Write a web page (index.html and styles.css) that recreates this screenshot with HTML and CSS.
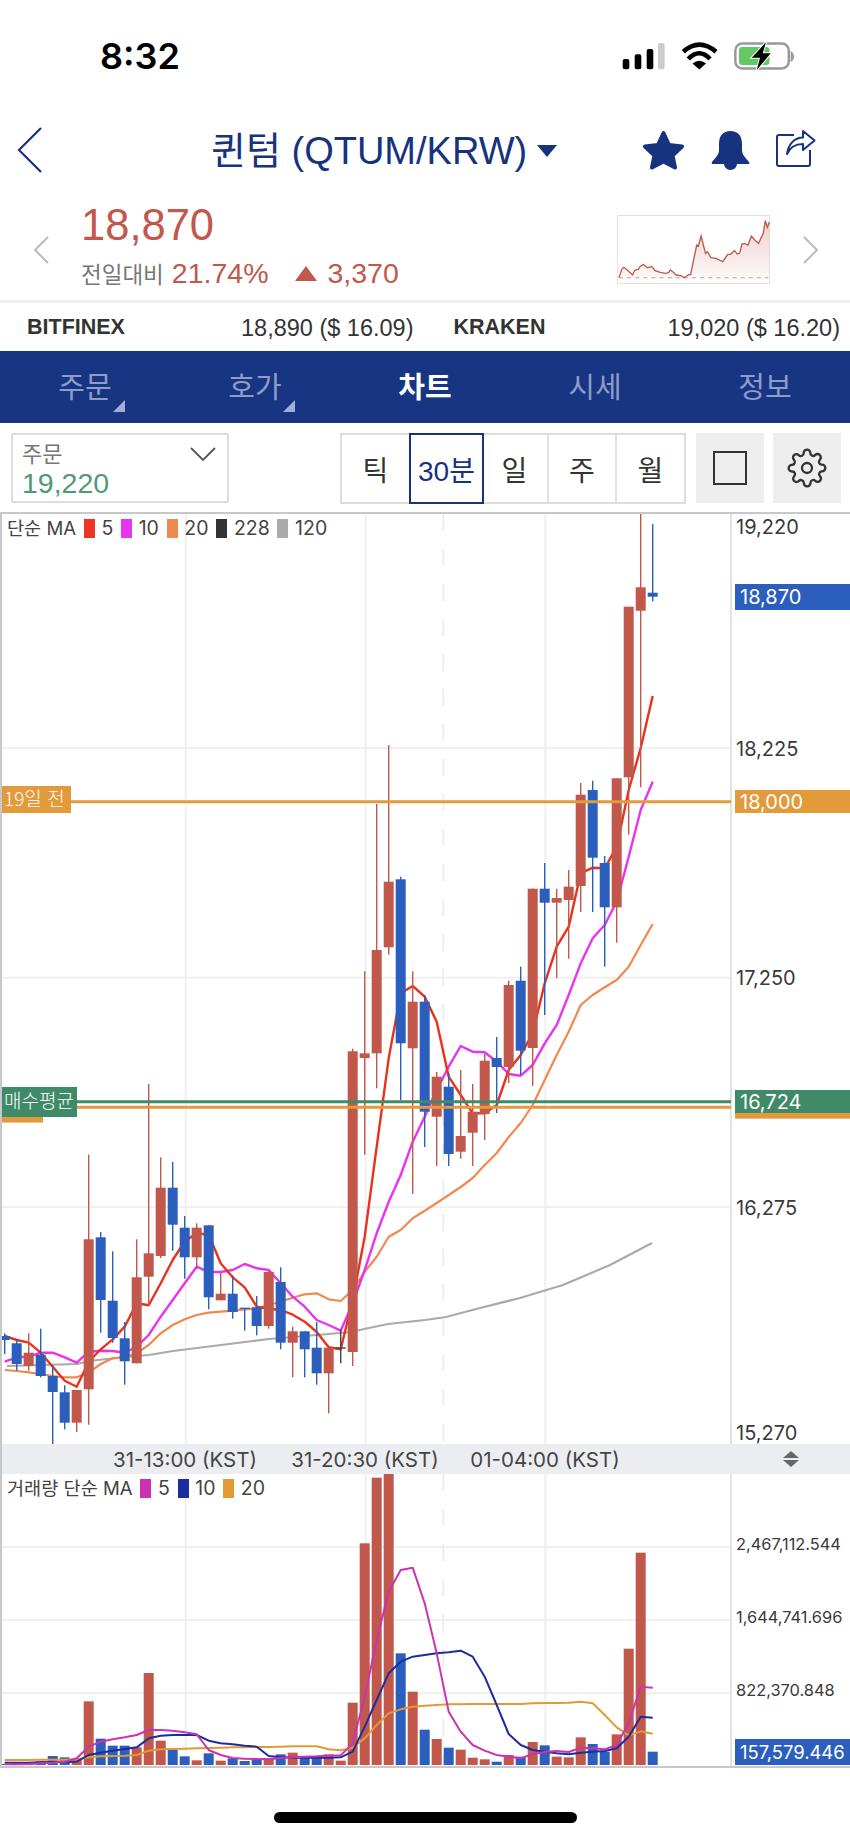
FILE: index.html

```html
<!DOCTYPE html>
<html lang="ko">
<head>
  <meta charset="UTF-8">
  <title>퀸텀 차트</title>
  <link rel="stylesheet" href="styles.css">
</head>
<body>
<div class="page">

  <div class="status-bar">
    <span class="status-time">8:32</span>
    <svg class="status-icons" width="176" height="30" viewBox="620 41 176 30">
      <rect x="622.7" y="59" width="6.6" height="10.3" rx="2" fill="#000"/>
      <rect x="634.7" y="54.3" width="6.6" height="15" rx="2" fill="#000"/>
      <rect x="646.7" y="49" width="6.6" height="20.3" rx="2" fill="#000"/>
      <rect x="658" y="43" width="6.6" height="26.3" rx="2" fill="#ccc"/>
      <path d="M683.3 51.7Q699.3 37.5 716 51.7" fill="none" stroke="#000" stroke-width="4.6"/>
      <path d="M688.3 59Q699.3 47.6 710 59" fill="none" stroke="#000" stroke-width="4.6"/>
      <path d="M699.3 69.5L692.5 63.5Q699.3 58 706 63.5Z" fill="#000"/>
      <rect x="735.3" y="43.5" width="53.5" height="25" rx="7" fill="none" stroke="#999" stroke-width="2.5"/>
      <path d="M790.7 51Q794 53 794 56.5Q794 60 790.7 62Z" fill="#999"/>
      <rect x="739" y="47" width="30.5" height="18" rx="3" fill="#62c964"/>
      <path d="M766 42.3L751.7 57.7H760L756.7 70L770.7 53.3H762.7Z" fill="#000" stroke="#fff" stroke-width="2" paint-order="stroke"/>
    </svg>
  </div>

  <div class="nav-bar">
    <svg class="back-icon" width="26" height="48" viewBox="0 0 26 48">
      <path d="M24 2L2 24L24 46" fill="none" stroke="#17337f" stroke-width="2.2"/>
    </svg>
    <div class="nav-title">퀸텀 (QTUM/KRW)</div>
    <div class="nav-caret"></div>
    <div class="nav-icons">
      <svg width="43" height="40" viewBox="0 0 43 40">
        <path d="M21.5 3L27 15L40 16.5L30.5 25.5L33 37.5L21.5 31.5L10 37.5L12.5 25.5L3 16.5L16 15Z" fill="#17337f" stroke="#17337f" stroke-width="4" stroke-linejoin="round"/>
      </svg>
      <svg width="39" height="40" viewBox="0 0 39 40">
        <path d="M19.5 1C12 1 8 6 8 14V20C8 25 4 28 1 32Q0 34 2 34H37Q39 34 38 32C35 28 31 25 31 20V14C31 6 27 1 19.5 1Z" fill="#17337f"/>
        <path d="M13 34A6.5 6 0 0 0 26 34Z" fill="#17337f"/>
      </svg>
      <svg width="40" height="40" viewBox="0 0 40 40">
        <path d="M18 5H3Q1 5 1 7V34Q1 36 3 36H32Q34 36 34 34V20" fill="none" stroke="#17337f" stroke-width="2"/>
        <path d="M27 1L38.5 10.5L27 20V14C20 14 14 17 11 24C12 15 18 7.5 27 7.5Z" fill="none" stroke="#17337f" stroke-width="2" stroke-linejoin="round"/>
      </svg>
    </div>
  </div>

  <div class="price-row">
    <svg class="price-prev" width="16" height="28" viewBox="0 0 16 28">
      <path d="M15 1L2 14L15 27" fill="none" stroke="#bbb" stroke-width="2"/>
    </svg>
    <div class="price-info">
      <div class="price-main">18,870</div>
      <div class="price-sub">
        <span class="price-label">전일대비</span>
        <span class="price-rate">21.74%</span>
        <span class="price-tri"></span>
        <span class="price-diff">3,370</span>
      </div>
    </div>
    <svg class="sparkline" width="153" height="69" viewBox="22 15 453 207" preserveAspectRatio="none">
      <defs>
        <linearGradient id="spark-fill" x1="0" y1="0" x2="0" y2="1">
          <stop offset="0" stop-color="#c1584b" stop-opacity="0.28"/>
          <stop offset="1" stop-color="#c1584b" stop-opacity="0.02"/>
        </linearGradient>
      </defs>
      <rect x="23.5" y="16.5" width="450" height="204" fill="#fff" stroke="#e2e2e2" stroke-width="3"/>
      <path d="M28 203L36 178L42 172L50 178L68 195L75 180L85 178L90 170L100 163L112 173L125 170L135 182L150 187L165 190L175 188L180 180L187 185L197 195L210 197L222 203L232 195L240 193L258 105L263 108L271 78L284 130L290 125L300 143L315 145L325 150L335 155L350 133L358 133L370 122L378 132L385 130L392 102L400 100L410 105L420 78L430 90L441 100L455 70L461 32L467 52L473 36V218H28Z" fill="url(#spark-fill)"/>
      <path d="M28 203H470" fill="none" stroke="#aaa" stroke-width="3" stroke-dasharray="12 12"/>
      <path d="M28 203L36 178L42 172L50 178L68 195L75 180L85 178L90 170L100 163L112 173L125 170L135 182L150 187L165 190L175 188L180 180L187 185L197 195L210 197L222 203L232 195L240 193L258 105L263 108L271 78L284 130L290 125L300 143L315 145L325 150L335 155L350 133L358 133L370 122L378 132L385 130L392 102L400 100L410 105L420 78L430 90L441 100L455 70L461 32L467 52L473 36" fill="none" stroke="#c1584b" stroke-width="4"/>
    </svg>
    <svg class="price-next" width="16" height="28" viewBox="0 0 16 28">
      <path d="M1 1L14 14L1 27" fill="none" stroke="#bbb" stroke-width="2"/>
    </svg>
  </div>

  <div class="exchange-row">
    <div class="exchange">
      <span class="exchange-name">BITFINEX</span>
      <span class="exchange-price">18,890 ($ 16.09)</span>
    </div>
    <div class="exchange">
      <span class="exchange-name">KRAKEN</span>
      <span class="exchange-price">19,020 ($ 16.20)</span>
    </div>
  </div>

  <div class="tab-bar">
    <div class="tab has-corner">주문</div>
    <div class="tab has-corner">호가</div>
    <div class="tab active">차트</div>
    <div class="tab">시세</div>
    <div class="tab">정보</div>
  </div>

  <div class="toolbar">
    <div class="order-box">
      <div class="order-label">주문</div>
      <div class="order-value">19,220</div>
      <svg class="order-arrow" width="26" height="15" viewBox="0 0 26 15">
        <path d="M1 1L13 13L25 1" fill="none" stroke="#555" stroke-width="1.8"/>
      </svg>
    </div>
    <div class="period-group">
      <div class="period">틱</div>
      <div class="period selected">30분</div>
      <div class="period">일</div>
      <div class="period">주</div>
      <div class="period">월</div>
    </div>
    <div class="tool-button">
      <div class="tool-square"></div>
    </div>
    <div class="tool-button">
      <svg width="40" height="40" viewBox="0 0 24 24" fill="none" stroke="#333" stroke-width="1.4">
        <circle cx="12" cy="12" r="3"/>
        <path d="M19.4 15a1.65 1.65 0 0 0 .33 1.82l.06.06a2 2 0 0 1 0 2.83 2 2 0 0 1-2.83 0l-.06-.06a1.65 1.65 0 0 0-1.82-.33 1.65 1.65 0 0 0-1 1.51V21a2 2 0 0 1-2 2 2 2 0 0 1-2-2v-.09A1.65 1.65 0 0 0 9 19.4a1.65 1.65 0 0 0-1.82.33l-.06.06a2 2 0 0 1-2.83 0 2 2 0 0 1 0-2.83l.06-.06a1.65 1.65 0 0 0 .33-1.82 1.65 1.65 0 0 0-1.51-1H3a2 2 0 0 1-2-2 2 2 0 0 1 2-2h.09A1.65 1.65 0 0 0 4.6 9a1.65 1.65 0 0 0-.33-1.82l-.06-.06a2 2 0 0 1 0-2.83 2 2 0 0 1 2.83 0l.06.06a1.65 1.65 0 0 0 1.82.33H9a1.65 1.65 0 0 0 1-1.51V3a2 2 0 0 1 2-2 2 2 0 0 1 2 2v.09a1.65 1.65 0 0 0 1 1.51 1.65 1.65 0 0 0 1.82-.33l.06-.06a2 2 0 0 1 2.83 0 2 2 0 0 1 0 2.83l-.06.06a1.65 1.65 0 0 0-.33 1.82V9a1.65 1.65 0 0 0 1.51 1H21a2 2 0 0 1 2 2 2 2 0 0 1-2 2h-.09a1.65 1.65 0 0 0-1.51 1z"/>
      </svg>
    </div>
  </div>

  <div class="chart">
    <div class="chart-panel">
      <svg id="price-chart" class="chart-svg" width="848" height="930" viewBox="2 514 848 930"></svg>
      <div class="legend">
        <span class="legend-name">단순 MA</span>
        <i class="swatch" style="background:#ee3524"></i><span>5</span>
        <i class="swatch" style="background:#e833f0"></i><span>10</span>
        <i class="swatch" style="background:#f0894f"></i><span>20</span>
        <i class="swatch" style="background:#333"></i><span>228</span>
        <i class="swatch" style="background:#aaa"></i><span>120</span>
      </div>
    </div>
    <div class="time-axis">
      <span class="time-label">31-13:00 (KST)</span>
      <span class="time-label">31-20:30 (KST)</span>
      <span class="time-label">01-04:00 (KST)</span>
      <div class="time-sort">
        <span class="sort-up"></span>
        <span class="sort-down"></span>
      </div>
    </div>
    <div class="chart-panel">
      <svg id="volume-chart" class="chart-svg" width="848" height="292" viewBox="2 1474 848 292"></svg>
      <div class="legend">
        <span class="legend-name">거래량 단순 MA</span>
        <i class="swatch" style="background:#cc33b0"></i><span>5</span>
        <i class="swatch" style="background:#1c2da0"></i><span>10</span>
        <i class="swatch" style="background:#e29a35"></i><span>20</span>
      </div>
    </div>
  </div>

  <div class="home-area">
    <div class="home-bar"></div>
  </div>
</div>
<script src="chart.js"></script>
</body>
</html>
```

FILE: styles.css

```css
html, body {
  margin: 0;
  padding: 0;
  background: #fff;
  font-family: "Liberation Sans", "Noto Sans CJK KR", sans-serif;
}
.page {
  width: 850px;
  height: 1840px;
  overflow: hidden;
}

/* status bar */
.status-bar {
  height: 95px;
  display: flex;
  align-items: flex-start;
  padding: 35px 54px 0 100px;
  box-sizing: border-box;
}
.status-time {
  font-family: Inter, sans-serif;
  font-weight: 600;
  font-size: 36px;
  line-height: 42px;
  color: #000;
}
.status-icons {
  margin-left: auto;
  margin-top: 6px;
}

/* title */
.nav-bar {
  height: 110px;
  display: flex;
  align-items: center;
  padding: 0 34px 0 17px;
  box-sizing: border-box;
  color: #17337f;
}
.nav-title {
  margin-left: 168px;
  padding-bottom: 5px;
  font-size: 38px;
  white-space: nowrap;
}
.nav-caret {
  margin-left: 10px;
  margin-top: 2px;
  width: 0;
  height: 0;
  border-left: 10.5px solid transparent;
  border-right: 10.5px solid transparent;
  border-top: 12px solid #17337f;
}
.nav-icons {
  margin-left: auto;
  display: flex;
  align-items: center;
  gap: 26px;
}

/* price */
.price-row {
  height: 95px;
  display: flex;
  align-items: flex-start;
  padding-left: 33px;
  box-sizing: border-box;
  color: #c1584b;
}
.price-prev {
  margin-top: 31px;
}
.price-info {
  margin-left: 32px;
  width: 536px;
}
.price-main {
  font-size: 43.5px;
  line-height: 40px;
}
.price-sub {
  margin-top: 12px;
  display: flex;
  align-items: center;
  height: 32px;
  font-size: 28.5px;
}
.price-label {
  font-size: 22.5px;
  color: #777;
  margin-right: 8px;
}
.price-tri {
  margin: 0 10px 0 27px;
  width: 0;
  height: 0;
  border-left: 11px solid transparent;
  border-right: 11px solid transparent;
  border-bottom: 15px solid #c1584b;
}
.sparkline {
  margin-top: 10px;
}
.price-next {
  margin: 31px 0 0 33px;
}

/* other exchanges */
.exchange-row {
  border-top: 3px solid #eee;
  display: flex;
  gap: 40px;
  align-items: center;
  padding: 3px 10px 0 27px;
  height: 45px;
  font-size: 23.5px;
  color: #333;
}
.exchange {
  flex: 1;
  display: flex;
  justify-content: space-between;
}
.exchange-name {
  font-weight: bold;
  font-size: 21.5px;
}

/* tabs */
.tab-bar {
  height: 72px;
  background: #173583;
  display: flex;
}
.tab {
  flex: 1;
  display: flex;
  align-items: center;
  justify-content: center;
  position: relative;
  font-size: 29px;
  color: #8c9dc9;
  padding-bottom: 4px;
  box-sizing: border-box;
}
.tab.active {
  color: #fff;
  font-weight: bold;
}
.tab.has-corner::after {
  content: "";
  position: absolute;
  right: 45px;
  bottom: 11px;
  border-left: 12px solid transparent;
  border-bottom: 12px solid #9fb0d6;
}

/* toolbar */
.toolbar {
  height: 89px;
  display: flex;
  align-items: flex-start;
  padding: 10px 0 0 11px;
  box-sizing: border-box;
}
.order-box {
  width: 218px;
  height: 70px;
  border: 2px solid #ddd;
  box-sizing: border-box;
  position: relative;
  padding: 7px 0 0 9px;
}
.order-label {
  font-size: 22px;
  line-height: 26px;
  color: #777;
}
.order-value {
  font-size: 28.5px;
  line-height: 30px;
  color: #4f9a75;
}
.order-arrow {
  position: absolute;
  top: 12px;
  right: 11px;
}
.period-group {
  margin: 0 1px 0 111px;
  width: 346px;
  height: 71px;
  border: 2px solid #ddd;
  box-sizing: border-box;
  display: grid;
  grid-template-columns: 69px 71px 67px 68px 67px;
}
.period {
  display: flex;
  align-items: center;
  justify-content: center;
  border-right: 2px solid #e2e2e2;
  font-size: 28px;
  color: #333;
}
.period:last-child {
  border-right: none;
}
.period.selected {
  color: #17337f;
  outline: 2px solid #17337f;
  border-right: none;
}
.tool-button {
  margin-left: 9px;
  width: 68px;
  height: 70px;
  background: #eee;
  display: flex;
  align-items: center;
  justify-content: center;
}
.tool-square {
  width: 30px;
  height: 30px;
  border: 2.5px solid #333;
}

/* chart */
.chart {
  border-top: 2px solid #c8c8c8;
  border-left: 2px solid #c8c8c8;
  border-bottom: 2px solid #c8c8c8;
}
.chart-panel {
  position: relative;
}
.chart-svg {
  display: block;
}
.axis-text {
  font-family: Inter, "Liberation Sans", sans-serif;
  font-size: 20px;
  fill: #3a3a3a;
}
.axis-text.small {
  font-size: 16.4px;
}
.axis-text.badge {
  fill: #fff;
}
.axis-text.tag {
  font-family: "Noto Sans CJK KR", sans-serif;
  font-size: 19px;
  font-weight: 300;
  fill: #fff;
}
.legend {
  position: absolute;
  top: 3px;
  left: 5px;
  display: flex;
  align-items: center;
  gap: 6.7px;
  font-family: Inter, "Noto Sans CJK KR", sans-serif;
  font-size: 19.5px;
  line-height: 22px;
  color: #444;
}
.legend-name {
  font-size: 18.6px;
}
.swatch {
  width: 11px;
  height: 19px;
  margin-left: 1px;
}
.time-axis {
  height: 30px;
  background: #ecedf1;
  display: flex;
  align-items: center;
  padding-left: 93px;
  font-family: Inter, sans-serif;
  font-size: 20.5px;
  color: #444;
}
.time-label {
  width: 180px;
  text-align: center;
}
.time-sort {
  margin-left: 148px;
  display: flex;
  flex-direction: column;
  gap: 2px;
}
.sort-up {
  border-left: 8px solid transparent;
  border-right: 8px solid transparent;
  border-bottom: 7px solid #666;
}
.sort-down {
  border-left: 8px solid transparent;
  border-right: 8px solid transparent;
  border-top: 7px solid #666;
}
.home-area {
  padding-top: 44px;
  display: flex;
  justify-content: center;
}
.home-bar {
  width: 303px;
  height: 11px;
  border-radius: 6px;
  background: #000;
}
```

FILE: chart.js

```js
// y values are page pixels, read off the screenshot
const RED = '#c1584b';
const BLUE = '#2c5fbd';
const DARK = '#444';
const NS = 'http://www.w3.org/2000/svg';
const xOf = i => 4.7 + 12 * i;

// [colour, body top, body bottom, wick top, wick bottom]
const candles = [
  [BLUE, 1336, 1340, 1333.3, 1354],
  [BLUE, 1343.3, 1364, 1340, 1370.7],
  [RED, 1352.7, 1366, 1333.3, 1370.7],
  [BLUE, 1354.7, 1376, 1328.7, 1377.3],
  [BLUE, 1376, 1392, 1365.3, 1444],
  [BLUE, 1392.3, 1422.7, 1385.3, 1429.3],
  [RED, 1390, 1422.7, 1390, 1432],
  [RED, 1239.3, 1389.3, 1154.7, 1424.7],
  [BLUE, 1237.3, 1300, 1232, 1332.7],
  [BLUE, 1300.7, 1338, 1251.3, 1342.7],
  [BLUE, 1338.3, 1361.3, 1322, 1384.7],
  [RED, 1277.3, 1363.3, 1239.3, 1363.3],
  [RED, 1253.3, 1276.7, 1084, 1305.3],
  [RED, 1187.7, 1256, 1157.3, 1258],
  [BLUE, 1187.7, 1224.7, 1162, 1250.7],
  [BLUE, 1227.7, 1257.3, 1216, 1278.7],
  [RED, 1227.7, 1257.3, 1223.3, 1269.3],
  [BLUE, 1225.3, 1297.3, 1225.3, 1309.3],
  [RED, 1293.7, 1300.3, 1272.7, 1300.3],
  [BLUE, 1293.7, 1312, 1275.3, 1318.7],
  [BLUE, 1307.7, 1309, 1307.7, 1330.7],
  [BLUE, 1307.3, 1326, 1296, 1335.3],
  [RED, 1272, 1326, 1270.7, 1328.7],
  [BLUE, 1282, 1342.7, 1267.3, 1349.3],
  [RED, 1331.3, 1342.7, 1326.7, 1377.3],
  [BLUE, 1331.3, 1349.3, 1331.3, 1377.3],
  [BLUE, 1347.7, 1373.3, 1322, 1384.7],
  [RED, 1347.7, 1373.3, 1347.7, 1413.3],
  [DARK, 1347.3, 1348.7, 1329.3, 1363.3],
  [RED, 1051.3, 1352, 1048.7, 1366],
  [RED, 1053.3, 1058, 971.3, 1154.7],
  [RED, 950, 1053.3, 804, 1088.3],
  [RED, 881.7, 947.3, 745, 954.7],
  [BLUE, 879.3, 1043.3, 876.7, 1100],
  [RED, 1001.7, 1048.3, 971.3, 1194],
  [BLUE, 1001.7, 1111.7, 995, 1147],
  [RED, 1076.7, 1116.7, 1072, 1166],
  [BLUE, 1086.7, 1154, 1073, 1166],
  [RED, 1136, 1151.7, 1070, 1158.7],
  [RED, 1111.7, 1132.7, 1084, 1166],
  [RED, 1060.7, 1114, 1054, 1140],
  [BLUE, 1058, 1067, 1037, 1113],
  [RED, 985, 1067, 980.7, 1083],
  [BLUE, 980.7, 1050.7, 966.7, 1075],
  [RED, 888.7, 1048, 888.7, 1086],
  [BLUE, 888.7, 902.7, 863, 1015],
  [RED, 898, 902.7, 888.7, 978],
  [RED, 886.7, 900, 870, 958.7],
  [RED, 794.7, 886, 783, 912],
  [BLUE, 790, 857.7, 780.7, 912],
  [BLUE, 863, 907.3, 856, 966.7],
  [RED, 778.3, 907.3, 778.3, 942.7],
  [RED, 606.7, 777.3, 606.7, 834.7],
  [RED, 587.3, 610.7, 514, 787.3],
  [BLUE, 592.7, 596.7, 524, 601.3]
];

const ma5 = [1336, 1340, 1342.7, 1352.7, 1366.7, 1380.7, 1386.7, 1362, 1349.3, 1339.3, 1326.7, 1303.3, 1305.3, 1283.3, 1260, 1241.3, 1233.3, 1234.7, 1263.3, 1277.3, 1287.3, 1306.7, 1308.7, 1310, 1314.7, 1321.7, 1332, 1347.3, 1349.3, 1300, 1236.7, 1146.7, 1058.3, 993.3, 986, 996.7, 1021.7, 1076.7, 1095, 1113.3, 1113.3, 1105, 1070, 1055, 1033.3, 983.3, 946.7, 926.7, 873.3, 867.7, 868.3, 846.7, 790, 748, 696];
const ma10 = [1361.7, 1357.3, 1356.7, 1352.7, 1352.7, 1357.3, 1362.7, 1351.7, 1350.7, 1351, 1352.7, 1346.7, 1335, 1316.7, 1300, 1283.3, 1266.7, 1272, 1272, 1270, 1264, 1268.3, 1270, 1283.3, 1296.7, 1306.7, 1320, 1325, 1330.7, 1303.3, 1270, 1233.3, 1201.7, 1175, 1141.7, 1116.7, 1090, 1066.7, 1046, 1051.7, 1052.3, 1061.7, 1074, 1075.7, 1065, 1043.3, 1025, 995, 963.3, 938.3, 925, 901.7, 856.7, 810, 781.7];
const ma20 = [1370, 1371, 1372.3, 1374, 1376, 1377.3, 1377.3, 1372.7, 1364, 1358.3, 1357.3, 1353.3, 1345, 1333.3, 1325, 1319.3, 1315, 1312.7, 1311.7, 1310.7, 1309.3, 1308.3, 1305, 1301.7, 1297.7, 1294.3, 1293.3, 1299.3, 1301, 1290, 1271.7, 1256.7, 1236.7, 1230, 1218.3, 1210.7, 1203, 1195, 1187, 1178, 1165, 1153, 1137, 1123, 1105, 1080, 1055, 1031.7, 1005, 995, 987.3, 980, 966.7, 945, 924];
const ma120 = [[7, 1366], [77, 1364], [89, 1361], [125, 1357], [149, 1355], [173, 1351], [197, 1348], [221, 1345], [245, 1342], [269, 1339], [293, 1337], [317, 1335], [340, 1333], [352, 1332], [364, 1329], [388, 1324], [425, 1320], [446, 1317], [480, 1308], [520, 1298], [563, 1285], [610, 1265], [652, 1243]];

// volume, measured on the 3x crop from y=1430
const volTops = [1002, 1000, 998, 994, 978, 982, 988, 814, 926, 947, 947, 952, 729, 932, 960, 979, 991, 970, 992, 985, 993, 985, 985, 973, 968, 980, 980, 973, 992, 818, 340, 143, 132, 670, 785, 899, 927, 953, 959, 983, 988, 995, 975, 980, 936, 946, 980, 982, 922, 942, 965, 913, 656, 368, 965];
const vol5 = [1003, 1003, 1002, 1000, 998, 995, 985, 950, 935, 928, 922, 915, 900, 900, 902, 907, 913, 960, 975, 984, 986, 987, 988, 984, 982, 980, 979, 977, 976, 940, 800, 630, 485, 420, 413, 520, 670, 845, 905, 945, 962, 975, 980, 985, 972, 966, 963, 966, 953, 955, 958, 945, 880, 770, 773];
const vol10 = [998, 998, 998, 997, 996, 996, 995, 975, 968, 962, 957, 952, 925, 917, 915, 915, 915, 932, 940, 943, 947, 950, 978, 982, 983, 983, 983, 983, 982, 965, 890, 810, 730, 695, 680, 675, 670, 667, 662, 680, 740, 825, 912, 945, 960, 965, 970, 973, 968, 965, 963, 955, 920, 860, 863];
const vol20 = [990, 990, 990, 989, 989, 989, 988, 982, 979, 978, 977, 975, 962, 958, 957, 956, 955, 954, 953, 952, 952, 951, 951, 950, 949, 949, 949, 958, 961, 953, 925, 885, 850, 838, 830, 827, 825, 823, 823, 822, 822, 822, 822, 822, 820, 819, 819, 818, 815, 820, 855, 892, 916, 904, 911];
const volY = v => 1430 + v / 3;

function add(svg, tag, attrs, text) {
  const el = document.createElementNS(NS, tag);
  Object.keys(attrs).forEach(k => el.setAttribute(k, attrs[k]));
  if (text) el.textContent = text;
  svg.appendChild(el);
  return el;
}

function hLine(svg, y, x1, x2, color, width) {
  add(svg, 'line', { x1, x2, y1: y, y2: y, stroke: color, 'stroke-width': width });
}

function polyline(svg, pts, color, width) {
  add(svg, 'polyline', {
    points: pts.map(p => p.join(',')).join(' '),
    fill: 'none', stroke: color, 'stroke-width': width, 'stroke-linejoin': 'round'
  });
}

function grid(svg, top, bottom, rows) {
  rows.forEach(y => hLine(svg, y, 2, 731, '#f0f0f0', 2));
  [185.7, 365.7, 545.3].forEach(x => {
    add(svg, 'line', { x1: x, x2: x, y1: top, y2: bottom, stroke: '#f0f0f0', 'stroke-width': 2 });
  });
  add(svg, 'line', {
    x1: 443.3, x2: 443.3, y1: top, y2: bottom,
    stroke: '#eee', 'stroke-width': 2, 'stroke-dasharray': '17 18'
  });
  add(svg, 'line', { x1: 731, x2: 731, y1: top, y2: bottom, stroke: '#e2e2e2', 'stroke-width': 2 });
}

function axisLabel(svg, y, text, cls) {
  add(svg, 'text', { x: 736, y: y, class: 'axis-text' + (cls ? ' ' + cls : '') }, text);
}

function badge(svg, top, bottom, color, text) {
  add(svg, 'rect', { x: 735, y: top, width: 115, height: bottom - top, fill: color });
  add(svg, 'text', { x: 740, y: (top + bottom) / 2 + 7, class: 'axis-text badge' }, text);
}

function drawPrice(svg) {
  grid(svg, 514, 1444, [748, 977.7, 1207]);

  const byIndex = list => list.map((y, i) => [xOf(i), y]);
  polyline(svg, ma120, '#aaa', 2.2);
  polyline(svg, byIndex(ma20), '#f0894f', 2.2);
  polyline(svg, byIndex(ma10), '#e833f0', 2.4);
  polyline(svg, byIndex(ma5), '#e8321c', 2.4);

  candles.forEach((c, i) => {
    const x = xOf(i);
    add(svg, 'rect', { x: x - 0.7, y: c[3], width: 1.4, height: c[4] - c[3], fill: c[0] });
    add(svg, 'rect', { x: x - 5, y: c[1], width: 10, height: c[2] - c[1], fill: c[0] });
  });

  // price lines and their tags
  hLine(svg, 801.7, 70, 731, '#e39a3b', 3);
  hLine(svg, 1101.7, 76, 731, '#3f8a68', 3);
  hLine(svg, 1107.3, 76, 731, '#e39a3b', 3);
  add(svg, 'rect', { x: 2, y: 786, width: 69, height: 27, fill: '#e39a3b' });
  add(svg, 'text', { x: 4, y: 806, class: 'axis-text tag' }, '19일 전');
  add(svg, 'rect', { x: 2, y: 1117, width: 41, height: 5.6, fill: '#e39a3b' });
  add(svg, 'rect', { x: 2, y: 1087, width: 75, height: 30, fill: '#3f8a68' });
  add(svg, 'text', { x: 4, y: 1108, class: 'axis-text tag' }, '매수평균');

  axisLabel(svg, 534, '19,220');
  axisLabel(svg, 756, '18,225');
  axisLabel(svg, 985, '17,250');
  axisLabel(svg, 1215, '16,275');
  axisLabel(svg, 1440, '15,270');
  add(svg, 'rect', { x: 735, y: 1113, width: 115, height: 5.7, fill: '#e39a3b' });
  badge(svg, 584, 610, BLUE, '18,870');
  badge(svg, 790, 813, '#e39a3b', '18,000');
  badge(svg, 1090, 1113, '#3f8a68', '16,724');
}

function drawVolume(svg) {
  grid(svg, 1474, 1766, [1547, 1620, 1693]);

  volTops.forEach((v, i) => {
    const top = Math.max(volY(v), 1474);
    const color = candles[i][0] === BLUE ? BLUE : RED;
    add(svg, 'rect', { x: xOf(i) - 5, y: top, width: 10, height: 1765 - top, fill: color });
  });

  const byIndex = list => list.map((v, i) => [xOf(i), volY(v)]);
  polyline(svg, byIndex(vol20), '#e29a35', 2);
  polyline(svg, byIndex(vol10), '#1c2da0', 2);
  polyline(svg, byIndex(vol5), '#cc33b0', 2);

  axisLabel(svg, 1550, '2,467,112.544', 'small');
  axisLabel(svg, 1623, '1,644,741.696', 'small');
  axisLabel(svg, 1695.5, '822,370.848', 'small');
  add(svg, 'rect', { x: 735, y: 1739, width: 115, height: 26, fill: BLUE });
  add(svg, 'text', { x: 740, y: 1758.5, class: 'axis-text badge', style: 'font-size:18.4px' }, '157,579.446');
}

drawPrice(document.getElementById('price-chart'));
drawVolume(document.getElementById('volume-chart'));
```
